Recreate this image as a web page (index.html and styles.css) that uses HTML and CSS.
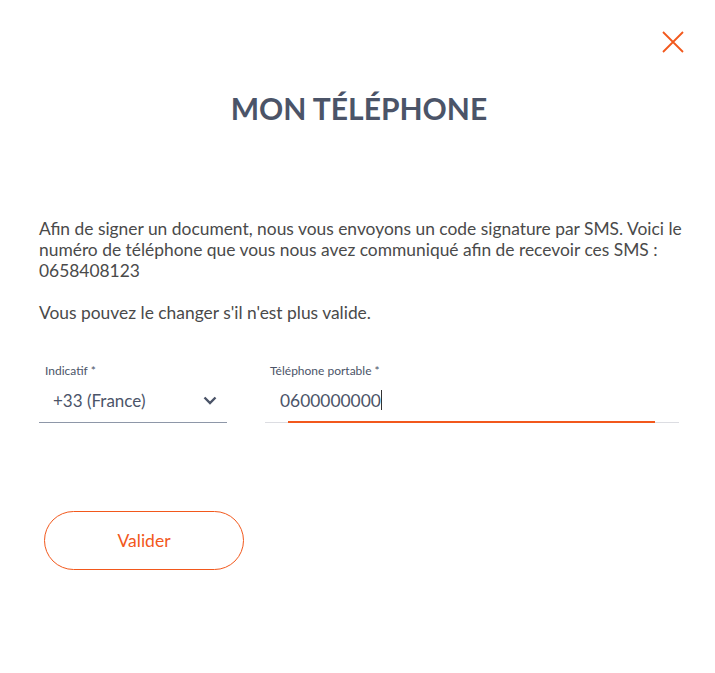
FILE: index.html
```html
<!DOCTYPE html>
<html lang="fr">
<head>
  <meta charset="UTF-8" />
  <meta name="viewport" content="width=device-width, initial-scale=1.0">
  <title>Mon téléphone</title>
  <link rel="stylesheet" href="styles.css">
</head>
<body>

  <div class="modal">
    <div class="modal-top">
      <button class="close-btn" title="Fermer">
        <svg width="22" height="22" viewBox="0 0 22 22">
          <path d="M1 1 L21 21 M21 1 L1 21" stroke="#f2581c" stroke-width="1.8" fill="none" />
        </svg>
      </button>
    </div>

    <h1>MON TÉLÉPHONE</h1>

    <div class="intro">
      <p>Afin de signer un document, nous vous envoyons un code signature par SMS. Voici le numéro de téléphone que vous nous avez communiqué afin de recevoir ces SMS : 0658408123</p>
      <p>Vous pouvez le changer s'il n'est plus valide.</p>
    </div>

    <div class="fields">
      <div class="field field-select">
        <label>Indicatif *</label>
        <div class="select-box">
          <span class="value">+33 (France)</span>
          <svg class="chevron" width="14" height="9" viewBox="0 0 14 9">
            <path d="M1.5 1.5 L7 7 L12.5 1.5" stroke="#4b5468" stroke-width="2.4" fill="none" />
          </svg>
        </div>
      </div>

      <div class="field field-phone">
        <label>Téléphone portable *</label>
        <div class="input-box">
          <span class="value">0600000000</span><span class="caret"></span>
        </div>
      </div>
    </div>

    <button class="submit-btn">Valider</button>
  </div>

</body>
</html>
```

FILE: styles.css
```css
body {
  font-family: Lato, "Noto Sans", sans-serif;
  background-color: #fff;
  margin: 0;
  padding: 0;
  color: #4a4a4a;
}

.modal {
  width: 715px;
  height: 673px;
  box-sizing: border-box;
  padding: 31px 36px 0 39px;
}

.modal-top {
  display: flex;
  justify-content: flex-end;
}

.close-btn {
  background: none;
  border: none;
  padding: 0;
  margin-right: -5px;
  width: 22px;
  height: 22px;
  cursor: pointer;
}

.close-btn svg {
  display: block;
}

h1 {
  color: #4b5468;
  font-size: 30px;
  font-weight: bold;
  text-align: center;
  margin: 37px 0 0;
  line-height: 36px;
}

.intro {
  margin: 92px -18px 0 0;
  font-size: 17.4px;
  line-height: 21px;
}

.intro p {
  margin: 0 0 21px;
}

.intro p:last-child {
  margin-bottom: 0;
}

.fields {
  display: flex;
  gap: 38px;
  margin-top: 40px;
}

.field label {
  display: block;
  font-size: 12px;
  color: #4b5468;
  line-height: 15px;
}

.field-select {
  width: 188px;
}

.field-select label {
  padding-left: 6px;
}

.select-box {
  display: flex;
  align-items: center;
  justify-content: space-between;
  height: 44px;
  padding: 0 10px 0 14px;
  border-bottom: 1px solid #8e97a8;
  font-size: 17px;
  color: #4b5468;
}

.field-phone {
  flex: 1;
}

.field-phone label {
  padding-left: 5px;
}

.input-box {
  position: relative;
  height: 44px;
  padding-left: 15px;
  display: flex;
  align-items: center;
  border-bottom: 1px solid #dcdde2;
  font-size: 17.4px;
  color: #4b5468;
}

.input-box::after {
  content: "";
  position: absolute;
  left: 23px;
  right: 24px;
  bottom: -1px;
  height: 2px;
  background-color: #f2581c;
}

.caret {
  display: inline-block;
  width: 1px;
  height: 20px;
  background-color: #333;
}

.submit-btn {
  display: block;
  margin: 88px 0 0 5px;
  width: 200px;
  height: 59px;
  border: 1px solid #f2581c;
  border-radius: 30px;
  background: #fff;
  color: #f2581c;
  font-family: Lato, "Noto Sans", sans-serif;
  font-size: 17.5px;
  cursor: pointer;
}
```
